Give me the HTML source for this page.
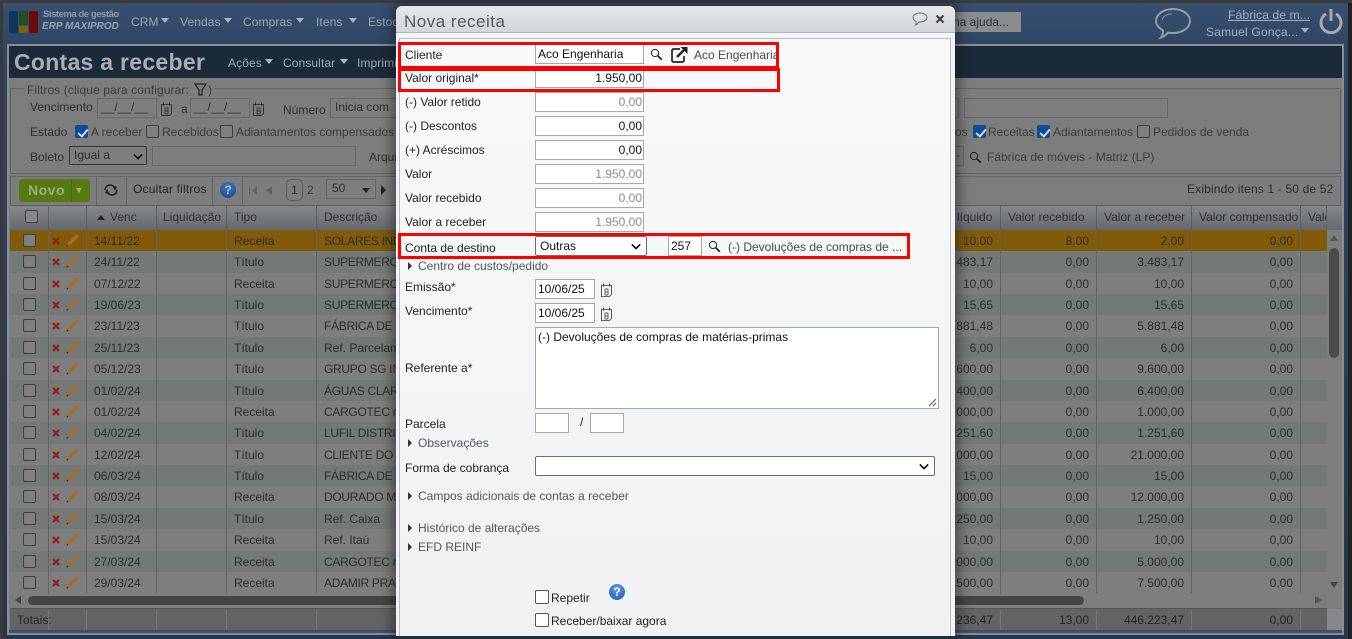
<!DOCTYPE html>
<html lang="pt"><head><meta charset="utf-8"><title>Contas a receber</title>
<style>
*{box-sizing:border-box}
html,body{margin:0;padding:0}
body{width:1352px;height:639px;overflow:hidden;position:relative;background:#2a2f36;font:12px/14px "Liberation Sans",sans-serif;color:#2c2c2c}
.a,.t,.l,.v{position:absolute;white-space:nowrap}
.a{display:block}
.t{color:#2e2e2e}
.m{color:#9aa6b5;font-size:12px;letter-spacing:.1px}
.tri{position:absolute;width:0;height:0;border-left:4.5px solid transparent;border-right:4.5px solid transparent;border-top:5px solid #a9b4c2}
.inp{position:absolute;border:1px solid #6a6a6a;background:#7d7f7f;color:#2e2e2e;padding:0 3px;line-height:17px;white-space:nowrap}
.cb{position:absolute;width:13px;height:13px;border:1px solid #3f3f3f;border-radius:2px;background:#7f7f7f}
.cb.on{background:#0f4a96;border-color:#0f4a96}
.cb.on:after{content:"";position:absolute;left:3.5px;top:0.5px;width:4px;height:8px;border:solid #d7dde6;border-width:0 2px 2px 0;transform:rotate(40deg)}
.hd{position:absolute;top:206px;height:24px;line-height:22px;color:#2f3033;padding-left:8px;border-right:1px solid #5c6068;white-space:nowrap;overflow:hidden}
.r{position:absolute;left:10px;width:1317px;height:22px;background:#747978}
.r.b{background:#7e7e7e}
.r.h{background:#7f5b0a}
.r span{position:absolute;top:4px;color:#2d2d2d;white-space:nowrap;line-height:14px}
.r .c1{left:84px}.r .c2{left:224px}.r .c3{left:314px;letter-spacing:-.3px}
.r .n1,.r .n2,.r .n3,.r .n4{text-align:right;width:90px}
.r .n1{left:893px}.r .n2{left:989px}.r .n3{left:1084px}.r .n4{left:1193px}
.r i{position:absolute;left:13px;top:4px;width:13px;height:13px;border:1px solid #3f3f3f;border-radius:2px;background:#7f7f7f}
.r svg{position:absolute;left:39px;top:1px;width:31px;height:18px}
.vl{position:absolute;top:230px;width:1px;height:363px;background:#626468}
.vl2{position:absolute;top:610px;width:1px;height:20px;background:#787878}
#modal{position:absolute;left:396px;top:6px;width:559px;height:633px;background:#f1f3f4;border-radius:6px 6px 0 0;box-shadow:0 0 12px 4px rgba(20,20,20,.5)}
#mt{position:absolute;left:0;top:0;width:559px;height:27px;border-radius:6px 6px 0 0;background:linear-gradient(#e6e8ea,#d3d6d8);border-bottom:1px solid #b4b7ba}
#mb{position:absolute;left:3px;top:32px;width:552px;height:601px;border:1px solid #b9bcbf;border-bottom:0;background:linear-gradient(#f8faf9,#f0f1f3)}
.l{color:#222;font-size:12px}
.i{position:absolute;left:535px;width:109px;height:20px;border:1px solid #a8a8a8;background:#fff;padding:0 1px;line-height:18px;color:#111;text-align:right;white-space:nowrap}
.i.g{color:#8d8d8d}
.i.left{text-align:left;padding-left:2px}
.sel{position:absolute;border:1px solid #6e6e6e;border-radius:2px;background:#fff;color:#111;line-height:18px;padding-left:4px}
.chev{position:absolute;right:5px;top:6px;width:10px;height:7px}
.exp{position:absolute;left:408px;color:#4f5a5e;padding-left:10px;line-height:14px;white-space:nowrap}
.exp:before{content:"";position:absolute;left:0;top:3px;border-left:4px solid #333;border-top:4px solid transparent;border-bottom:4px solid transparent}
.red{position:absolute;border:3px solid #f00}
.mcb{position:absolute;left:535px;width:14px;height:14px;border:1px solid #555;border-radius:2px;background:#fff}
</style></head><body>
<svg width="0" height="0" style="position:absolute"><defs>
<symbol id="rowi" viewBox="0 0 31 18">
<path d="M4 7l6 6M10 7l-6 6" stroke="#8f1f1f" stroke-width="2.2" fill="none"/>
<path d="M17.500 15.500l1-3.500 9-9 2.500 2.500-9 9z" fill="#a56c2e"/><path d="M17.500 15.500l.5-2 1.500 1.500z" fill="#222"/>
</symbol>
<symbol id="mag" viewBox="0 0 13 13"><circle cx="5" cy="5" r="3.600" fill="none" stroke="currentColor" stroke-width="1"/><path d="M7.800 7.800l4 4" stroke="currentColor" stroke-width="1.800"/></symbol>
<symbol id="cal" viewBox="0 0 13 14"><path d="M1.500 2.500h10v9l-2 2h-8z" fill="none" stroke="currentColor" stroke-width=".8"/><path d="M3.500 .5v3M9.500 .5v3" stroke="currentColor" stroke-width=".9"/><path d="M5 6h3v6h-3zM5 9h3" fill="none" stroke="currentColor" stroke-width=".7"/></symbol>
</defs></svg>

<div class="a" style="left:0;top:0;width:1352px;height:3px;background:#3b3b3b"></div>
<div class="a" style="left:3px;top:3px;width:1345px;height:636px;background:linear-gradient(#384f6d,#2f4664 40px,#25354a 100%)"></div>
<div class="a" style="left:0;top:3px;width:3px;height:636px;background:#39393b"></div>
<div class="a" style="left:1348px;top:3px;width:4px;height:636px;background:#222"></div>

<!-- logo -->
<div class="a" style="left:9px;top:11px;width:9px;height:22px;border-radius:2px;background:#113459"></div>
<div class="a" style="left:19px;top:11px;width:9px;height:14px;border-radius:2px 2px 0 0;background:#1c501c"></div>
<div class="a" style="left:19px;top:26px;width:9px;height:7px;border-radius:0 0 2px 2px;background:#7e6112"></div>
<div class="a" style="left:29px;top:11px;width:9px;height:22px;border-radius:2px;background:#680c0c"></div>
<div class="t" style="left:43px;top:8px;font-size:9.500px;font-weight:bold;letter-spacing:-.45px;color:#8f9aa8">Sistema de gestão</div>
<div class="t" style="left:42px;top:20px;font-size:10px;font-weight:bold;font-style:italic;color:#96a2b0">ERP MAXIPROD</div>
<div class="t m" style="left:131px;top:15px">CRM</div><div class="tri" style="left:161px;top:18px"></div>
<div class="t m" style="left:180px;top:15px">Vendas</div><div class="tri" style="left:224px;top:18px"></div>
<div class="t m" style="left:243px;top:15px">Compras</div><div class="tri" style="left:296px;top:18px"></div>
<div class="t m" style="left:316px;top:15px">Itens</div><div class="tri" style="left:349px;top:18px"></div>
<div class="t m" style="left:368px;top:15px">Estoque</div>
<div class="a" style="left:950px;top:12px;width:71px;height:20px;background:#8a8d8e;color:#2e3136;line-height:20px;padding-left:3px">na ajuda...</div>
<svg class="a" style="left:1154px;top:7px" width="38" height="33" viewBox="0 0 38 33"><path d="M19 2c9 0 17 5 17 12s-8 12-17 12c-2 0-3.500 0-5-.5-2 2.500-4 4-7 5 1.500-2 2-4 2-7C5 21 2 18 2 14 2 7 10 2 19 2z" fill="none" stroke="#8f9ca9" stroke-width="2"/><path d="M8 13c1-4 5-6 10-6" fill="none" stroke="#8f9ca9" stroke-width="1"/></svg>
<div class="t" style="left:1228px;top:8px;font-size:12.300px;color:#a3afbd;text-decoration:underline">Fábrica de m...</div>
<div class="t" style="left:1206px;top:25px;font-size:12px;letter-spacing:.2px;color:#a3afbd">Samuel Gonça...</div><div class="tri" style="left:1301px;top:28px;border-top-color:#a3afbd"></div>
<svg class="a" style="left:1319px;top:8px" width="24" height="26" viewBox="0 0 24 26"><path d="M7 6a10 10 0 1 0 10 0" fill="none" stroke="#a5a9ad" stroke-width="3"/><path d="M12 1v12" stroke="#a5a9ad" stroke-width="3"/></svg>

<!-- panel -->
<div class="a" style="left:7px;top:44px;width:1337px;height:591px;border:2px solid #8b8e90;background:#7c7e7e"></div>
<div class="a" style="left:9px;top:46px;width:1333px;height:32px;background:#1b2a3b"></div>
<div class="t" style="left:14px;top:48px;font-size:23px;line-height:28px;font-weight:bold;letter-spacing:.28px;color:#a9adb1">Contas a receber</div>
<div class="t m" style="left:228px;top:56px;font-size:12px">Ações</div><div class="tri" style="left:265px;top:59px"></div>
<div class="t m" style="left:283px;top:56px;font-size:12px">Consultar</div><div class="tri" style="left:340px;top:59px"></div>
<div class="t m" style="left:357px;top:56px;font-size:12px">Imprimir</div>

<!-- filters -->
<div class="a" style="left:10px;top:88px;width:1331px;height:86px;border:1px solid #626467;border-radius:2px"></div>
<div class="a" style="left:25px;top:80px;height:16px;width:190px;background:#7c7e7e"></div>
<div class="t" style="left:27px;top:83px;color:#383a3c;letter-spacing:.1px">Filtros (clique para configurar:</div>
<svg class="a" style="left:194px;top:83px" width="13" height="13" viewBox="0 0 13 13"><path d="M1 1h11L8 7v5H5V7z" fill="none" stroke="#222" stroke-width="1.200"/></svg>
<div class="t" style="left:208px;top:83px;color:#383a3c">)</div>
<div class="t" style="left:30px;top:100px">Vencimento</div>
<div class="inp" style="left:97px;top:98px;width:60px;height:20px">__/__/__</div>
<svg class="a" style="left:160px;top:102px;color:#222" width="13" height="14"><use href="#cal"/></svg>
<div class="t" style="left:181px;top:102px">a</div>
<div class="inp" style="left:190px;top:98px;width:60px;height:20px">__/__/__</div>
<svg class="a" style="left:252px;top:102px;color:#222" width="13" height="14"><use href="#cal"/></svg>
<div class="t" style="left:283px;top:103px">Número</div>
<div class="inp" style="left:330px;top:98px;width:70px;height:20px;border-radius:2px;padding-left:4px">Inicia com</div>
<div class="inp" style="left:950px;top:98px;width:9px;height:20px"></div>
<div class="inp" style="left:964px;top:98px;width:204px;height:20px"></div>
<div class="t" style="left:30px;top:125px">Estado</div>
<div class="cb on" style="left:75px;top:125px"></div><div class="t" style="left:91px;top:125px;color:#3c3c3c">A receber</div>
<div class="cb" style="left:146px;top:125px"></div><div class="t" style="left:162px;top:125px;color:#3c3c3c">Recebidos</div>
<div class="cb" style="left:220px;top:125px"></div><div class="t" style="left:236px;top:125px;color:#3c3c3c">Adiantamentos compensados</div>
<div class="t" style="left:955px;top:125px;color:#3c3c3c">os</div>
<div class="cb on" style="left:973px;top:125px"></div><div class="t" style="left:988px;top:125px;color:#3c3c3c">Receitas</div>
<div class="cb on" style="left:1037px;top:125px"></div><div class="t" style="left:1053px;top:125px;color:#3c3c3c">Adiantamentos</div>
<div class="cb" style="left:1137px;top:125px"></div><div class="t" style="left:1153px;top:125px;color:#3c3c3c">Pedidos de venda</div>
<div class="t" style="left:30px;top:150px">Boleto</div>
<div class="inp" style="left:69px;top:146px;width:78px;height:19px;border-color:#333;border-radius:2px;padding-left:4px">Igual a<svg class="chev" viewBox="0 0 12 7" style="right:3px"><path d="M1 1l5 5 5-5" fill="none" stroke="#111" stroke-width="2"/></svg></div>
<div class="inp" style="left:152px;top:146px;width:204px;height:20px"></div>
<div class="t" style="left:369px;top:150px">Arquivo</div>
<div class="inp" style="left:950px;top:146px;width:14px;height:20px;padding:0 5px">-</div>
<svg class="a" style="left:969px;top:151px;color:#222" width="13" height="13"><use href="#mag"/></svg>
<div class="t" style="left:987px;top:150px;color:#3c3c3c">Fábrica de móveis - Matriz (LP)</div>

<!-- toolbar -->
<div class="a" style="left:10px;top:176px;width:1331px;height:30px;border:1px solid #646669;border-bottom:1px solid #5d5f62"></div>
<div class="a" style="left:19px;top:179px;width:71px;height:23px;border-radius:3px;background:#557a10"></div>
<div class="a" style="left:71px;top:179px;width:1px;height:23px;background:#4c6a10"></div>
<div class="t" style="left:28px;top:183px;font-size:14px;font-weight:bold;letter-spacing:.5px;color:#a3ab83">Novo</div>
<div class="tri" style="left:76px;top:188px;border-top-color:#a3ab83;border-left-width:3.500px;border-right-width:3.500px"></div>
<div class="a" style="left:96px;top:177px;width:1px;height:28px;background:#666"></div>
<svg class="a" style="left:103px;top:183px" width="16" height="14" viewBox="0 0 16 14"><path d="M2 7a5 5 0 0 1 9-3M14 7a5 5 0 0 1-9 3" fill="none" stroke="#222" stroke-width="1.600"/><path d="M9 2l5 2-2 4zM7 12l-5-2 2-4z" fill="#222"/></svg>
<div class="a" style="left:126px;top:177px;width:1px;height:28px;background:#666"></div>
<div class="t" style="left:133px;top:182px;color:#222;letter-spacing:.2px">Ocultar filtros</div>
<div class="a" style="left:212px;top:177px;width:1px;height:28px;background:#666"></div>
<div class="a" style="left:220px;top:182px;width:16px;height:16px;border-radius:50%;background:radial-gradient(circle at 50% 30%,#3c73b8,#1c4a8c);color:#b8c5d8;font-weight:bold;text-align:center;line-height:16px">?</div>
<div class="a" style="left:242px;top:177px;width:1px;height:28px;background:#666"></div>
<svg class="a" style="left:248px;top:185px" width="30" height="11" viewBox="0 0 30 11"><path d="M1 1h1v9H1zM9 1v9L4 5.500zM24 1v9l-6-4.500z" fill="#5f6163"/></svg>
<div class="a" style="left:286px;top:179px;width:17px;height:22px;border:1px solid #5a5c5e;border-radius:5px;text-align:center;line-height:21px;color:#2c2c2c">1</div>
<div class="t" style="left:307px;top:183px;color:#3c3c3c">2</div>
<div class="inp" style="left:326px;top:179px;width:50px;height:20px;border-color:#626466;padding-left:5px">50</div>
<div class="a" style="left:362px;top:188px;border-top:5px solid #222;border-left:4px solid transparent;border-right:4px solid transparent"></div>
<div class="a" style="left:381px;top:185px;border-left:5px solid #222;border-top:5px solid transparent;border-bottom:5px solid transparent"></div>
<div class="t" style="left:1187px;top:182px;color:#2c2c2c;letter-spacing:.16px">Exibindo itens 1 - 50 de 52</div>

<!-- header -->
<div class="a" style="left:10px;top:206px;width:1332px;height:24px;background:linear-gradient(#858789,#66696d)"></div>
<div class="hd" style="left:10px;width:39px"></div><div class="cb" style="left:25px;top:210px;background:#85878a"></div>
<div class="hd" style="left:49px;width:38px"></div>
<div class="hd" style="left:87px;width:70px;padding-left:23px">Venc</div><div class="a" style="left:97px;top:215px;border-bottom:5px solid #222;border-left:4px solid transparent;border-right:4px solid transparent"></div>
<div class="hd" style="left:157px;width:70px;padding-left:6px">Liquidação</div>
<div class="hd" style="left:227px;width:90px;padding-left:7px">Tipo</div>
<div class="hd" style="left:317px;width:200px;padding-left:7px">Descrição</div>
<div class="hd" style="left:950px;width:51px;padding-left:7px">líquido</div>
<div class="hd" style="left:1001px;width:96px;padding-left:7px">Valor recebido</div>
<div class="hd" style="left:1097px;width:95px;padding-left:7px">Valor a receber</div>
<div class="hd" style="left:1192px;width:109px;padding-left:7px">Valor compensado</div>
<div class="hd" style="left:1301px;width:26px;padding-left:7px">Valor</div>

<!-- rows -->
<div class="r h" style="top:230px"><i></i><svg><use href="#rowi"/></svg><span class="c1">14/11/22</span><span class="c2">Receita</span><span class="c3">SOLARES INDÚSTRIA</span><span class="n1">10,00</span><span class="n2">8,00</span><span class="n3">2,00</span><span class="n4">0,00</span></div>
<div class="r" style="top:251px"><i></i><svg><use href="#rowi"/></svg><span class="c1">24/11/22</span><span class="c2">Título</span><span class="c3">SUPERMERCADO</span><span class="n1">3.483,17</span><span class="n2">0,00</span><span class="n3">3.483,17</span><span class="n4">0,00</span></div>
<div class="r b" style="top:273px"><i></i><svg><use href="#rowi"/></svg><span class="c1">07/12/22</span><span class="c2">Receita</span><span class="c3">SUPERMERCADO</span><span class="n1">10,00</span><span class="n2">0,00</span><span class="n3">10,00</span><span class="n4">0,00</span></div>
<div class="r" style="top:294px"><i></i><svg><use href="#rowi"/></svg><span class="c1">19/06/23</span><span class="c2">Título</span><span class="c3">SUPERMERCADO</span><span class="n1">15,65</span><span class="n2">0,00</span><span class="n3">15,65</span><span class="n4">0,00</span></div>
<div class="r b" style="top:315px"><i></i><svg><use href="#rowi"/></svg><span class="c1">23/11/23</span><span class="c2">Título</span><span class="c3">FÁBRICA DE MÓVEIS</span><span class="n1">5.881,48</span><span class="n2">0,00</span><span class="n3">5.881,48</span><span class="n4">0,00</span></div>
<div class="r" style="top:337px"><i></i><svg><use href="#rowi"/></svg><span class="c1">25/11/23</span><span class="c2">Título</span><span class="c3" style="letter-spacing:0">Ref. Parcelamento</span><span class="n1">6,00</span><span class="n2">0,00</span><span class="n3">6,00</span><span class="n4">0,00</span></div>
<div class="r b" style="top:358px"><i></i><svg><use href="#rowi"/></svg><span class="c1">05/12/23</span><span class="c2">Título</span><span class="c3">GRUPO SG INDÚSTRIA</span><span class="n1">9.600,00</span><span class="n2">0,00</span><span class="n3">9.600,00</span><span class="n4">0,00</span></div>
<div class="r" style="top:380px"><i></i><svg><use href="#rowi"/></svg><span class="c1">01/02/24</span><span class="c2">Título</span><span class="c3">ÁGUAS CLARAS</span><span class="n1">6.400,00</span><span class="n2">0,00</span><span class="n3">6.400,00</span><span class="n4">0,00</span></div>
<div class="r b" style="top:401px"><i></i><svg><use href="#rowi"/></svg><span class="c1">01/02/24</span><span class="c2">Receita</span><span class="c3">CARGOTEC reparos</span><span class="n1">1.000,00</span><span class="n2">0,00</span><span class="n3">1.000,00</span><span class="n4">0,00</span></div>
<div class="r" style="top:422px"><i></i><svg><use href="#rowi"/></svg><span class="c1">04/02/24</span><span class="c2">Título</span><span class="c3">LUFIL DISTRIBUIDORA</span><span class="n1">1.251,60</span><span class="n2">0,00</span><span class="n3">1.251,60</span><span class="n4">0,00</span></div>
<div class="r b" style="top:444px"><i></i><svg><use href="#rowi"/></svg><span class="c1">12/02/24</span><span class="c2">Título</span><span class="c3">CLIENTE DO PEDIDO</span><span class="n1">21.000,00</span><span class="n2">0,00</span><span class="n3">21.000,00</span><span class="n4">0,00</span></div>
<div class="r" style="top:465px"><i></i><svg><use href="#rowi"/></svg><span class="c1">06/03/24</span><span class="c2">Título</span><span class="c3">FÁBRICA DE MÓVEIS</span><span class="n1">15,00</span><span class="n2">0,00</span><span class="n3">15,00</span><span class="n4">0,00</span></div>
<div class="r b" style="top:486px"><i></i><svg><use href="#rowi"/></svg><span class="c1">08/03/24</span><span class="c2">Receita</span><span class="c3">DOURADO MÓVEIS</span><span class="n1">12.000,00</span><span class="n2">0,00</span><span class="n3">12.000,00</span><span class="n4">0,00</span></div>
<div class="r" style="top:508px"><i></i><svg><use href="#rowi"/></svg><span class="c1">15/03/24</span><span class="c2">Título</span><span class="c3" style="letter-spacing:0">Ref. Caixa</span><span class="n1">1.250,00</span><span class="n2">0,00</span><span class="n3">1.250,00</span><span class="n4">0,00</span></div>
<div class="r b" style="top:529px"><i></i><svg><use href="#rowi"/></svg><span class="c1">15/03/24</span><span class="c2">Receita</span><span class="c3" style="letter-spacing:0">Ref. Itaú</span><span class="n1">10,00</span><span class="n2">0,00</span><span class="n3">10,00</span><span class="n4">0,00</span></div>
<div class="r" style="top:551px"><i></i><svg><use href="#rowi"/></svg><span class="c1">27/03/24</span><span class="c2">Receita</span><span class="c3">CARGOTEC reparos</span><span class="n1">5.000,00</span><span class="n2">0,00</span><span class="n3">5.000,00</span><span class="n4">0,00</span></div>
<div class="r b" style="top:572px;height:21px"><i></i><svg><use href="#rowi"/></svg><span class="c1">29/03/24</span><span class="c2">Receita</span><span class="c3">ADAMIR PRATES</span><span class="n1">7.500,00</span><span class="n2">0,00</span><span class="n3">7.500,00</span><span class="n4">0,00</span></div>
<div class="vl" style="left:48px"></div><div class="vl" style="left:86px"></div><div class="vl" style="left:156px"></div><div class="vl" style="left:226px"></div><div class="vl" style="left:316px"></div><div class="vl" style="left:1000px"></div><div class="vl" style="left:1096px"></div><div class="vl" style="left:1191px"></div><div class="vl" style="left:1300px"></div>

<!-- vertical scrollbar -->
<div class="a" style="left:1327px;top:230px;width:15px;height:363px;background:#7c7e7e"></div>
<div class="a" style="left:1329px;top:248px;width:10px;height:110px;border-radius:5px;background:#4a4a4a"></div>
<div class="a" style="left:1330px;top:235px;border-bottom:6px solid #555;border-left:4.500px solid transparent;border-right:4.500px solid transparent"></div>
<div class="a" style="left:1330px;top:582px;border-top:6px solid #444;border-left:4.500px solid transparent;border-right:4.500px solid transparent"></div>
<!-- horizontal scrollbar -->
<div class="a" style="left:28px;top:596px;width:1056px;height:9px;border-radius:5px;background:#454545"></div>
<div class="a" style="left:15px;top:596px;border-right:6px solid #444;border-top:4.500px solid transparent;border-bottom:4.500px solid transparent"></div>
<div class="a" style="left:1315px;top:596px;border-left:7px solid #555;border-top:4.500px solid transparent;border-bottom:4.500px solid transparent"></div>
<!-- totals -->
<div class="a" style="left:10px;top:608px;width:1317px;height:22px;background:#626364;border-top:1px solid #555"></div>
<div class="a" style="left:1327px;top:609px;width:15px;height:21px;background:#858789"></div>
<div class="t" style="left:17px;top:613px;color:#252525">Totais:</div>
<div class="vl2" style="left:48px"></div><div class="vl2" style="left:86px"></div><div class="vl2" style="left:156px"></div><div class="vl2" style="left:226px"></div><div class="vl2" style="left:316px"></div><div class="vl2" style="left:1000px"></div><div class="vl2" style="left:1096px"></div><div class="vl2" style="left:1191px"></div><div class="vl2" style="left:1300px"></div>
<div class="t" style="left:955px;top:613px;width:38px;text-align:right;color:#252525">236,47</div>
<div class="t" style="left:1040px;top:613px;width:49px;text-align:right;color:#252525">13,00</div>
<div class="t" style="left:1110px;top:613px;width:74px;text-align:right;color:#252525">446.223,47</div>
<div class="t" style="left:1240px;top:613px;width:53px;text-align:right;color:#252525">0,00</div>
<div class="a" style="left:9px;top:630px;width:1333px;height:3px;background:#39516d"></div>

<!-- modal -->
<div id="modal"><div id="mt"></div><div id="mb"></div></div>
<div class="t" style="left:404px;top:12px;font-size:17px;line-height:20px;letter-spacing:.5px;color:#555a5e">Nova receita</div>
<svg class="a" style="left:912px;top:12px" width="16" height="14" viewBox="0 0 16 14"><path d="M8 1c4 0 7 2 7 4.500S12 10 8 10H7c-1 1.500-2 2.500-3.500 3 .5-1 .8-2 .6-3.500C2 8.700 1 7.200 1 5.500 1 3 4 1 8 1z" fill="none" stroke="#6d7478" stroke-width="1"/></svg>
<svg class="a" style="left:935px;top:14px" width="10" height="10" viewBox="0 0 10 10"><path d="M1.500 1.500l7 7M8.500 1.500l-7 7" stroke="#444" stroke-width="2.200"/></svg>

<div class="l" style="left:405px;top:48px">Cliente</div>
<div class="i left" style="top:44px">Aco Engenharia</div>
<svg class="a" style="left:650px;top:48px;color:#222" width="13" height="13"><use href="#mag"/></svg>
<svg class="a" style="left:671px;top:46px" width="17" height="17" viewBox="0 0 17 17"><path d="M9 3H2.500A1.500 1.500 0 0 0 1 4.500v10A1.500 1.500 0 0 0 2.500 16h9a1.500 1.500 0 0 0 1.500-1.500V10" fill="none" stroke="#222" stroke-width="1.700"/><path d="M6 11l8-8" stroke="#222" stroke-width="2.500"/><path d="M9.500 1H16.500V8z" fill="#222"/></svg>
<div class="l" style="left:694px;top:48px;color:#4b4a50">Aco Engenharia</div>
<div class="l" style="left:405px;top:71px">Valor original*</div>
<div class="i" style="top:68px">1.950,00</div>
<div class="l" style="left:405px;top:95px">(-) Valor retido</div>
<div class="i g" style="top:92px">0,00</div>
<div class="l" style="left:405px;top:119px">(-) Descontos</div>
<div class="i" style="top:116px">0,00</div>
<div class="l" style="left:405px;top:143px">(+) Acréscimos</div>
<div class="i" style="top:140px">0,00</div>
<div class="l" style="left:405px;top:167px">Valor</div>
<div class="i g" style="top:164px">1.950,00</div>
<div class="l" style="left:405px;top:191px">Valor recebido</div>
<div class="i g" style="top:188px">0,00</div>
<div class="l" style="left:405px;top:215px">Valor a receber</div>
<div class="i g" style="top:212px">1.950,00</div>
<div class="l" style="left:405px;top:241px">Conta de destino</div>
<div class="sel" style="left:535px;top:236px;width:112px;height:20px">Outras<svg class="chev" viewBox="0 0 12 7"><path d="M1 1l5 5 5-5" fill="none" stroke="#111" stroke-width="2"/></svg></div>
<div class="i left" style="left:668px;top:236px;width:34px">257</div>
<svg class="a" style="left:708px;top:240px;color:#222" width="13" height="13"><use href="#mag"/></svg>
<div class="l" style="left:728px;top:240px;color:#4b4a50">(-) Devoluções de compras de ...</div>
<div class="exp" style="top:259px">Centro de custos/pedido</div>
<div class="l" style="left:405px;top:280px">Emissão*</div>
<div class="i left" style="top:279px;width:60px">10/06/25</div>
<svg class="a" style="left:600px;top:283px;color:#333" width="13" height="14"><use href="#cal"/></svg>
<div class="l" style="left:405px;top:304px">Vencimento*</div>
<div class="i left" style="top:303px;width:60px">10/06/25</div>
<svg class="a" style="left:600px;top:307px;color:#333" width="13" height="14"><use href="#cal"/></svg>
<div class="l" style="left:405px;top:361px">Referente a*</div>
<div class="i left" style="top:327px;width:404px;height:82px;white-space:normal;line-height:18px">(-) Devoluções de compras de matérias-primas<svg class="a" style="right:1px;bottom:1px" width="9" height="9" viewBox="0 0 9 9"><path d="M8 1L1 8M8 5L5 8" stroke="#555"/></svg></div>
<div class="l" style="left:405px;top:417px">Parcela</div>
<div class="i" style="top:413px;width:34px"></div>
<div class="l" style="left:580px;top:415px">/</div>
<div class="i" style="left:590px;top:413px;width:34px"></div>
<div class="exp" style="top:436px">Observações</div>
<div class="l" style="left:405px;top:461px">Forma de cobrança</div>
<div class="sel" style="left:535px;top:456px;width:400px;height:20px"><svg class="chev" viewBox="0 0 12 7"><path d="M1 1l5 5 5-5" fill="none" stroke="#111" stroke-width="2"/></svg></div>
<div class="exp" style="top:489px;color:#555">Campos adicionais de contas a receber</div>
<div class="exp" style="top:521px;color:#555">Histórico de alterações</div>
<div class="exp" style="top:540px;color:#555">EFD REINF</div>
<div class="mcb" style="top:590px"></div>
<div class="l" style="left:551px;top:591px">Repetir</div>
<div class="a" style="left:609px;top:584px;width:16px;height:16px;border-radius:50%;background:radial-gradient(circle at 50% 30%,#5c9be8,#2257ae);color:#fff;font-weight:bold;text-align:center;line-height:16px">?</div>
<div class="mcb" style="top:613px"></div>
<div class="l" style="left:551px;top:614px">Receber/baixar agora</div>
<div class="a" style="left:396px;top:636px;width:559px;height:3px;background:#1e2d40"></div>

<!-- red highlights -->
<div class="red" style="left:398px;top:42px;width:381px;height:27px"></div>
<div class="red" style="left:398px;top:68px;width:382px;height:24px"></div>
<div class="red" style="left:398px;top:233px;width:512px;height:26px"></div>
</body></html>
